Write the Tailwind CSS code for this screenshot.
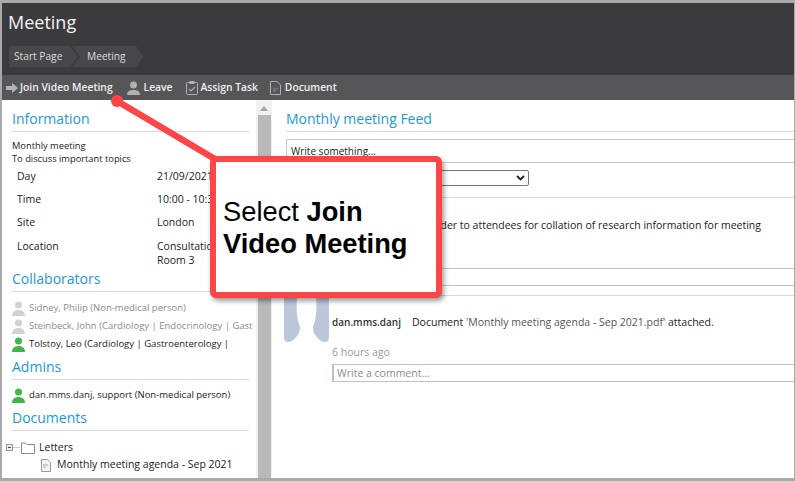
<!DOCTYPE html>
<html lang="en">
<head>
    <meta charset="UTF-8">
    <title>Meeting</title>
    <script src="https://cdn.jsdelivr.net/npm/@tailwindcss/browser@4"></script>
</head>
<body class="bg-white overflow-hidden">
    <div class="relative w-[795px] h-[481px] overflow-hidden bg-white border-t-[3px] border-l-2 border-r border-b-[3px] border-[#a9a9a9] font-['Open_Sans',sans-serif] text-[10.5px] text-[#222] flex flex-col">

        <!-- header -->
        <div class="h-[72px] shrink-0 bg-[#3b3b3d] px-[6px]">
            <div class="pt-[6px] text-[18px] leading-[26px] text-[#f2f2f2]">Meeting</div>
            <div class="mt-[11px] ml-[1px] flex h-[21px] w-[134px] items-center bg-[#48484a] text-[10.2px] text-[#dcdcdc]" style="clip-path: polygon(0 0, 127px 0, 134px 50%, 127px 100%, 0 100%)">
                <span class="pl-[5px] w-[62px] shrink-0">Start Page</span>
                <svg class="w-[9px] h-[21px] shrink-0" viewBox="0 0 9 21"><path d="M0 0 L8 10.500 L0 21" fill="none" stroke="#3b3b3d" stroke-width="1.500"/></svg>
                <span class="pl-[7px]">Meeting</span>
            </div>
        </div>

        <!-- toolbar -->
        <div class="h-[25px] shrink-0 bg-[#565658] flex items-center text-[10.3px] font-semibold text-[#efefef]">
            <svg class="ml-[4px] w-[12px] h-[10px]" viewBox="0 0 12 10"><path d="M0 3h6V0l6 5-6 5V7H0z" fill="#b4b4b4"/></svg>
            <span class="ml-[2px]">Join Video Meeting</span>
            <svg class="ml-[14px] w-[13px] h-[14px]" viewBox="0 0 13 14"><circle cx="6.500" cy="4" r="3.500" fill="#b0b0b0"/><path d="M0 14c0-4 3-5 6.500-5s6.500 1 6.500 5z" fill="#b0b0b0"/></svg>
            <span class="ml-[4px]">Leave</span>
            <svg class="ml-[13px] w-[12px] h-[14px]" viewBox="0 0 12 14"><rect x="0.500" y="1.500" width="11" height="12" rx="1" fill="none" stroke="#b0b0b0"/><rect x="3.500" y="0" width="5" height="3" fill="#b0b0b0"/><path d="M3 8l2 2 4-4" fill="none" stroke="#b0b0b0" stroke-width="1.200"/></svg>
            <span class="ml-[3px]">Assign Task</span>
            <svg class="ml-[12px] w-[11px] h-[14px]" viewBox="0 0 11 14"><path d="M0.500 0.500h6.500l3.500 3.500v9.500h-10z" fill="none" stroke="#b0b0b0"/><path d="M3 8h5M3 10h3" stroke="#8a8a8a"/></svg>
            <span class="ml-[4px]">Document</span>
        </div>

        <div class="flex flex-1 min-h-0">
            <!-- left panel -->
            <div class="w-[254px] shrink-0 pl-[10px] pr-[7px] overflow-hidden">
                <h2 class="mt-[9px] text-[14px] leading-[20px] text-[#1b9ad6] border-b border-[#d9d9d9] pb-[2px]">Information</h2>
                <div class="mt-[7px] leading-[13px] text-[9.3px]">Monthly meeting<br>To discuss important topics</div>
                <div class="grid grid-cols-[140px_1fr] pl-[5px] leading-[14px]">
                    <div class="mt-[4px] h-[18px]">Day</div><div class="mt-[4px] h-[18px] whitespace-nowrap">21/09/2021</div>
                    <div class="mt-[5px] h-[18px]">Time</div><div class="mt-[5px] h-[18px] whitespace-nowrap">10:00 - 10:30</div>
                    <div class="mt-[5px] h-[18px]">Site</div><div class="mt-[5px] h-[18px]">London</div>
                    <div class="mt-[6px]">Location</div><div class="mt-[6px] whitespace-nowrap">Consultation<br>Room 3</div>
                </div>
                <h2 class="mt-[2px] text-[14px] leading-[20px] text-[#1b9ad6] border-b border-[#d9d9d9] pb-[2px]">Collaborators</h2>
                <div class="mt-[7px] flex h-[18px] items-center gap-[4px] whitespace-nowrap text-[9.5px] text-[#8c8c8c]">
                    <svg class="w-[13px] h-[15px] shrink-0" viewBox="0 0 13 15"><circle cx="6.500" cy="4" r="3.500" fill="#d2d2d2"/><path d="M0 15c0-4 3-6 6.500-6s6.500 2 6.500 6z" fill="#d2d2d2"/></svg>
                    <span>Sidney, Philip (Non-medical person)</span>
                </div>
                <div class="flex h-[18px] items-center gap-[4px] whitespace-nowrap text-[9.5px] text-[#8c8c8c]">
                    <svg class="w-[13px] h-[15px] shrink-0" viewBox="0 0 13 15"><circle cx="6.500" cy="4" r="3.500" fill="#d2d2d2"/><path d="M0 15c0-4 3-6 6.500-6s6.500 2 6.500 6z" fill="#d2d2d2"/></svg>
                    <span>Steinbeck, John (Cardiology | Endocrinology | Gast</span>
                </div>
                <div class="flex h-[18px] items-center gap-[4px] whitespace-nowrap text-[9.5px]">
                    <svg class="w-[13px] h-[15px] shrink-0" viewBox="0 0 13 15"><circle cx="6.500" cy="4" r="3.500" fill="#3fb54a"/><path d="M0 15c0-4 3-6 6.500-6s6.500 2 6.500 6z" fill="#3fb54a"/></svg>
                    <span>Tolstoy, Leo (Cardiology | Gastroenterology |</span>
                </div>
                <h2 class="mt-[4px] text-[14px] leading-[20px] text-[#1b9ad6] border-b border-[#d9d9d9] pb-[2px]">Admins</h2>
                <div class="mt-[6px] flex h-[18px] items-center gap-[4px] whitespace-nowrap text-[9.5px]">
                    <svg class="w-[13px] h-[15px] shrink-0" viewBox="0 0 13 15"><circle cx="6.500" cy="4" r="3.500" fill="#3fb54a"/><path d="M0 15c0-4 3-6 6.500-6s6.500 2 6.500 6z" fill="#3fb54a"/></svg>
                    <span>dan.mms.danj, support (Non-medical person)</span>
                </div>
                <h2 class="mt-[4px] text-[14px] leading-[20px] text-[#1b9ad6] border-b border-[#d9d9d9] pb-[2px]">Documents</h2>
                <div class="-ml-[6px] mt-[8px] flex h-[17px] items-center whitespace-nowrap">
                    <svg class="w-[15px] h-[12px] shrink-0" viewBox="0 0 15 12"><rect x="0.500" y="2.500" width="6" height="6" fill="#eee" stroke="#999"/><path d="M2 5.500h3" stroke="#444"/><path d="M7 5.500h7" stroke="#ccc"/></svg>
                    <svg class="w-[14px] h-[12px] shrink-0" viewBox="0 0 14 12"><path d="M0.500 11.500V1h4l1.500 1.500h7.500v9z" fill="#fff" stroke="#8a8a8a"/></svg>
                    <span class="ml-[4px]">Letters</span>
                </div>
                <div class="ml-[29px] flex h-[18px] items-center whitespace-nowrap">
                    <svg class="w-[10px] h-[13px] shrink-0" viewBox="0 0 10 13"><path d="M0.500 0.500h6l3 3v9h-9z" fill="#f2f2f2" stroke="#999"/><path d="M2 6h5M2 8h3" stroke="#aaa"/></svg>
                    <span class="ml-[6px]">Monthly meeting agenda - Sep 2021</span>
                </div>
            </div>

            <!-- scrollbar -->
            <div class="w-[16px] shrink-0 bg-[#f1f1f1] flex flex-col items-center">
                <svg class="mt-[6px] w-[8px] h-[5px]" viewBox="0 0 8 5"><path d="M4 0l4 5H0z" fill="#a3a3a3"/></svg>
                <div class="mt-[4px] w-[13px] flex-1 bg-[#b9b9b9]"></div>
            </div>

            <!-- feed -->
            <div class="flex-1 min-w-0 pl-[14px] overflow-hidden">
                <h2 class="mt-[9px] text-[14px] leading-[20px] text-[#1b9ad6] border-b border-[#d9d9d9] pb-[2px]">Monthly meeting Feed</h2>
                <div class="mt-[7px] h-[24px] border border-[#c9c9c9] border-r-0 pl-[4px] leading-[22px] text-[10px]">Write something...</div>
                <div class="h-[35px] border-b border-[#d9d9d9] pt-[7px]">
                    <div class="h-[16px] w-[243px] border border-[#767676] rounded-[2px] flex items-center justify-end pr-[3px]">
                        <svg class="w-[9px] h-[6px]" viewBox="0 0 9 6"><path d="M1 1l3.500 3.500L8 1" fill="none" stroke="#222" stroke-width="1.800"/></svg>
                    </div>
                </div>
                <div class="h-[71px] border-b border-[#b8c4d6] pt-[20px] text-right pr-[33px] leading-[14px] whitespace-nowrap">Reminder to attendees for collation of research information for meeting</div>
                <div class="h-[17px] border-b border-[#b8c4d6]"></div>
                <div class="mt-[9px] border-t border-[#d9d9d9] flex">
                    <svg class="mt-[2px] ml-[-2px] w-[45px] h-[44px] shrink-0" viewBox="0 0 45 44">
                        <path d="M0 0H13C12 12 13 20 15 26C17 30 16 34 13 38C10 42 7 44 4 44C1 44 0 42 0 38Z" fill="#bcc7dc"/>
                        <path d="M45 0H32C33 12 32 20 30 26C28 30 29 34 32 38C35 42 38 44 41 44C44 44 45 42 45 38Z" fill="#bcc7dc"/>
                    </svg>
                    <div class="ml-[3px] flex-1 min-w-0">
                        <div class="mt-[19px] whitespace-nowrap leading-[14px]"><span class="font-semibold text-[10px] text-[#333]">dan.mms.danj</span><span class="ml-[11px]">Document</span> <span class="text-[#555]">'Monthly meeting agenda - Sep 2021.pdf'</span> attached.</div>
                        <div class="mt-[16px] text-[#9a9a9a] leading-[14px]">6 hours ago</div>
                        <div class="mt-[5px] h-[18px] border border-[#b8c4d6] border-l-[2px] border-r-0 pl-[3px] leading-[16px] text-[#8c8c8c]">Write a comment...</div>
                    </div>
                </div>
            </div>
        </div>

        <!-- annotation overlay -->
        <svg class="absolute left-[-2px] top-[-3px] w-[795px] h-[481px] pointer-events-none" viewBox="0 0 795 481">
            <line x1="117" y1="101" x2="225" y2="165" stroke="#ff4545" stroke-width="6.500"/>
            <circle cx="117" cy="101" r="6" fill="#ff4545"/>
        </svg>
        <div class="absolute left-[208px] top-[153px] w-[232px] h-[142px] bg-white border-[6px] border-[#ff4545] rounded-[6px] shadow-[2px_3px_5px_rgba(0,0,0,0.4)] pl-[7px] pt-[34px] font-['Liberation_Sans',sans-serif] text-[27.300px] leading-[32px] text-black">
            Select <b>Join<br>Video Meeting</b>
        </div>
    </div>
</body>
</html>
